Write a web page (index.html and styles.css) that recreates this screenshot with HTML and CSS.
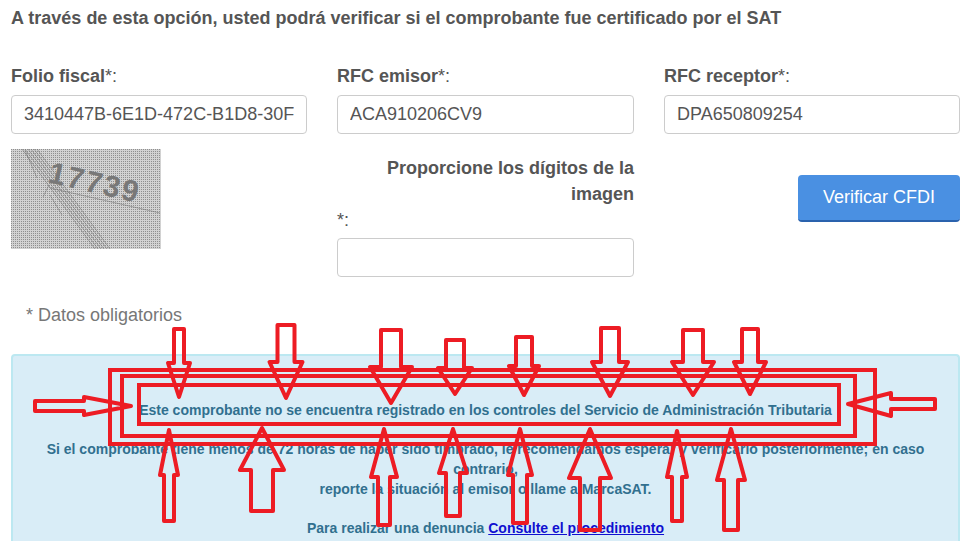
FILE: index.html
```html
<!DOCTYPE html>
<html lang="es">
<head>
<meta charset="utf-8">
<title>Verificación de comprobantes</title>
<link rel="stylesheet" href="styles.css">
</head>
<body>
<main class="page">
  <h1 class="intro">A través de esta opción, usted podrá verificar si el comprobante fue certificado por el SAT</h1>
  <form class="form-grid">
    <div class="field">
      <label class="field-label"><b>Folio fiscal</b>*:</label>
      <input class="control" type="text" value="3410447B-6E1D-472C-B1D8-30F">
    </div>
    <div class="field">
      <label class="field-label"><b>RFC emisor</b>*:</label>
      <input class="control" type="text" value="ACA910206CV9">
    </div>
    <div class="field">
      <label class="field-label"><b>RFC receptor</b>*:</label>
      <input class="control" type="text" value="DPA650809254">
    </div>
    <div class="captcha-cell">
      <svg class="captcha" viewBox="0 0 150 100" width="150" height="100" role="img" aria-label="Imagen de verificación">
        <defs>
          <pattern id="dots" width="2" height="2" patternUnits="userSpaceOnUse">
            <rect width="2" height="2" fill="#d2d2d2"/>
            <rect width="1" height="1" fill="#8f8f8f"/>
          </pattern>
        </defs>
        <rect width="150" height="100" fill="url(#dots)"/>
        <g class="captcha-lines">
          <path d="M11 0 L84 100"/>
          <path d="M14 0 L87 100"/>
          <path d="M17 0 L90 100"/>
          <path d="M20 0 L93 100"/>
          <path d="M23 0 L96 100"/>
          <path d="M26 0 L99 100"/>
          <path d="M39 39 L149 64"/>
          <path d="M14 1 L26 29"/>
          <path d="M39 46 L51 66"/>
          <path d="M38 36 L32 48"/>
        </g>
        <text class="captcha-text" transform="translate(36 33) rotate(13)">17739</text>
      </svg>
    </div>
    <div class="field captcha-field">
      <label class="captcha-label"><b class="captcha-prompt">Proporcione los dígitos de la imagen</b>*:</label>
      <input class="control" type="text">
    </div>
    <div class="action-cell">
      <button class="primary" type="button">Verificar CFDI</button>
    </div>
  </form>
  <p class="required-note">* Datos obligatorios</p>
  <section class="alert">
    <p class="alert-text">Este comprobante no se encuentra registrado en los controles del Servicio de Administración Tributaria</p>
    <p class="alert-text">Si el comprobante tiene menos de 72 horas de haber sido timbrado, le recomendamos esperar y verificarlo posteriormente; en caso contrario,<br>reporte la situación al emisor o llame a MarcaSAT.</p>
    <p class="alert-text">Para realizar una denuncia <a class="alert-link" href="#">Consulte el procedimiento</a></p>
  </section>
</main>
<svg class="markup" viewBox="0 0 965 541" width="965" height="541" aria-hidden="true">
  <rect x="110" y="370" width="765" height="74"/>
  <rect x="122" y="376" width="733" height="60"/>
  <rect x="139" y="385" width="700" height="39"/>
  <polygon points="174,329 184,329 184,363 190,363 179,397 168,363 174,363"/>
  <polygon points="277.5,325 294.5,325 294.5,362 302.5,362 286,398 269.5,362 277.5,362"/>
  <polygon points="381,330 401,330 401,367 412,367 391,403 370,367 381,367"/>
  <polygon points="446,340 464,340 464,368 472,368 455,394 438,368 446,368"/>
  <polygon points="516,337 532,337 532,366 539,366 524,395 509,366 516,366"/>
  <polygon points="601,328 619,328 619,362 628,362 610,396 592,362 601,362"/>
  <polygon points="683,330 703,330 703,362 714,362 693,395 672,362 683,362"/>
  <polygon points="742,329 758,329 758,362 766,362 750,394 734,362 742,362"/>
  <polygon points="164,521 174,521 174,475 178,475 169,430 160,475 164,475"/>
  <polygon points="251,511 273,511 273,470 284,470 262,428 240,470 251,470"/>
  <polygon points="378,525 390,525 390,477 397,477 384,429 371,477 378,477"/>
  <polygon points="446,516 460,516 460,473 467,473 453,429 439,473 446,473"/>
  <polygon points="513,523 527,523 527,475 532,475 520,429 508,475 513,475"/>
  <polygon points="580,530 600,530 600,478 611,478 590,429 569,478 580,478"/>
  <polygon points="672,521 682,521 682,477 687,477 677,431 667,477 672,477"/>
  <polygon points="724,530 738,530 738,480 745,480 731,429 717,480 724,480"/>
  <polygon points="35,401 84,401 84,397 131,406 84,415 84,411 35,411"/>
  <polygon points="935,399 891,399 891,393 848,404 891,416 891,409 935,409"/>
</svg>
</body>
</html>
```
FILE: styles.css
```css
* { box-sizing: border-box; }
html, body { margin: 0; height: 541px; overflow: hidden; background: #fff; }
body {
  position: relative;
  font-family: "Liberation Sans", Arial, sans-serif;
  color: #555;
}
.page { padding: 9px 5px 0 11px; }
.intro {
  margin: 0;
  font-size: 18px;
  line-height: 18px;
  font-weight: 700;
}
.form-grid {
  display: grid;
  grid-template-columns: 296px 297px 296px;
  column-gap: 30px;
  margin-top: 31px;
}
.field-label {
  display: block;
  font-size: 18px;
  line-height: 20px;
  margin: 8px 0 9px;
}
.control {
  display: block;
  width: 100%;
  height: 39px;
  padding: 0 12px;
  border: 1px solid #ccc;
  border-radius: 4px;
  font: 18px "Liberation Sans", Arial, sans-serif;
  color: #555;
  background: #fff;
}
.captcha-cell { padding-top: 15px; }
.captcha { display: block; }
.captcha-lines path { stroke: #6a6a6a; stroke-width: 0.5; fill: none; }
.captcha-text {
  font: 700 30px "Liberation Sans", Arial, sans-serif;
  letter-spacing: 2px;
  fill: #787878;
}
.captcha-field { padding-top: 21px; }
.captcha-label {
  display: block;
  font-size: 18px;
  line-height: 26px;
  margin-bottom: 5px;
}
.captcha-prompt { display: block; text-align: right; }
.action-cell {
  display: flex;
  justify-content: flex-end;
  padding-top: 41px;
}
.primary {
  width: 162px;
  height: 47px;
  border: 0;
  border-bottom: 2px solid #2a62ad;
  border-radius: 4px;
  background: #4a90e2;
  color: #fff;
  font: 18px "Liberation Sans", Arial, sans-serif;
}
.required-note {
  margin: 28px 0 0 15px;
  font-size: 18px;
  line-height: 20px;
  color: #777;
}
.alert {
  margin-top: 29px;
  height: 187px;
  padding: 44px 30px 0;
  background: #d9edf7;
  border: 1px solid #bce8f1;
  border-width: 2px 2px 0;
  border-radius: 4px 4px 0 0;
  text-align: center;
}
.alert-text {
  margin: 0 0 19px;
  font-size: 14px;
  line-height: 20px;
  font-weight: 700;
  color: #31708f;
}
.alert-link { color: #1010d0; }
.markup {
  position: absolute;
  left: 0;
  top: 0;
  pointer-events: none;
}
.markup rect, .markup polygon {
  fill: none;
  stroke: #ed1c24;
  stroke-width: 4;
  stroke-linejoin: round;
}
.markup rect { stroke-linejoin: miter; }
```
